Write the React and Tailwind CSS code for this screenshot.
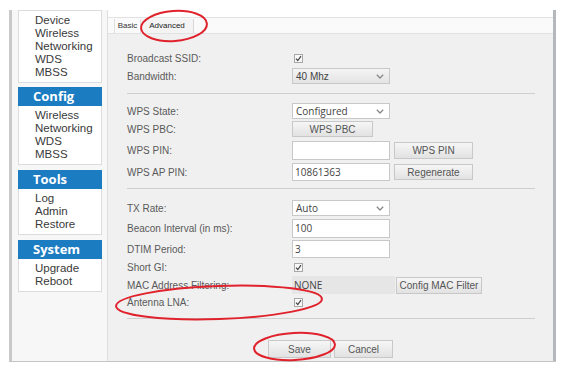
import React from "react";

const Check = () => (
  <span className="ml-[2px] inline-flex h-[9px] w-[9px] items-center justify-center border border-[#a8a8a8] bg-[#f8f8f8]">
    <svg width="7" height="7" viewBox="0 0 7 7">
      <path d="M1 3.6 L2.8 5.5 L6 1.2" fill="none" stroke="#444" strokeWidth="1.2" />
    </svg>
  </span>
);

const Chevron = () => (
  <svg width="8" height="5" viewBox="0 0 8 5" className="absolute right-[5px] top-[5px]">
    <path d="M0.8 0.8 L4 4 L7.2 0.8" fill="none" stroke="#888" strokeWidth="1.3" />
  </svg>
);

const Select = ({ children, grey }) => (
  <div
    className={
      "relative flex h-[16px] w-[98px] items-center border border-[#c8c8c8] pl-[3px] text-[10px] text-[#444] " +
      (grey ? "bg-gradient-to-b from-[#f4f4f4] to-[#e4e4e4] font-['Liberation_Sans',Arial,sans-serif]" : "bg-white font-['Open_Sans',sans-serif]")
    }
  >
    {children}
    <Chevron />
  </div>
);

const Input = ({ children, h = "h-[19px]" }) => (
  <div className={"flex w-[98px] items-center border border-[#c8c8c8] bg-white pl-[2px] font-['Open_Sans',sans-serif] text-[10px] text-[#444] " + h}>
    {children}
  </div>
);

const Btn = ({ children, w, h = "h-[17px]", cls = "" }) => (
  <div
    className={
      "flex items-center justify-center border border-[#c8c8c8] bg-gradient-to-b from-[#f6f6f6] to-[#e2e2e2] text-[10px] text-[#555] " +
      w + " " + h + " " + cls
    }
  >
    {children}
  </div>
);

const Row = ({ label, h, cls = "", children }) => (
  <div className={"flex items-center " + h + " " + cls}>
    <div className="w-[165px] text-[10px] text-[#5a5a5a]">{label}</div>
    {children}
  </div>
);

const Hr = ({ cls }) => <div className={"mr-[18px] h-px bg-[#cfcfcf] " + cls} />;

const SideBox = ({ items }) => (
  <div className="flex flex-col border-x border-b border-[#dcdcdc] bg-white pb-[3px] pl-[16px] pt-[3px] text-[11.5px] leading-[13px] text-[#3a3a3a]">
    {items.map((t) => (
      <div key={t}>{t}</div>
    ))}
  </div>
);

const Head = ({ children }) => (
  <div className="flex h-[19px] items-center bg-[#1c7cc2] pl-[15px] font-['Open_Sans',sans-serif] text-[13px] font-bold text-white">
    {children}
  </div>
);

export default function App() {
  return (
    <div className="relative h-[381px] w-[575px] overflow-hidden bg-white font-['Liberation_Sans',Arial,sans-serif]">
      <div className="ml-[9px] mt-[10px] flex h-[352px] w-[547px] border-b border-[#c4c4c4]">
        <div className="w-[3px] bg-[#c9c9c9]" />
        {/* sidebar */}
        <div className="flex w-[96px] flex-col border-r border-[#dedede] bg-[#f7f7f7] pl-[6px]">
          <div className="w-[84px]">
            <div className="border-t border-[#dcdcdc]">
              <SideBox items={["Device", "Wireless", "Networking", "WDS", "MBSS"]} />
            </div>
            <div className="mt-[4px]">
              <Head>Config</Head>
              <SideBox items={["Wireless", "Networking", "WDS", "MBSS"]} />
            </div>
            <div className="mt-[5px]">
              <Head>Tools</Head>
              <SideBox items={["Log", "Admin", "Restore"]} />
            </div>
            <div className="mt-[5px]">
              <Head>System</Head>
              <SideBox items={["Upgrade", "Reboot"]} />
            </div>
          </div>
        </div>
        {/* main */}
        <div className="flex flex-1 flex-col bg-[#f0f0f0]">
          <div className="h-[7px] bg-white" />
          <div className="flex h-[17px] border-y border-[#e2e2e2] bg-[#fafafa] pl-[6px]">
            <div className="mt-[1px] flex w-[27px] items-center justify-center border-x border-[#e0e0e0] text-[8px] text-[#333]">Basic</div>
            <div className="mt-[1px] flex w-[53px] items-center justify-center border-r border-[#d8d8d8] bg-[#f4f4f4] text-[8px] text-[#222]">Advanced</div>
          </div>
          <div className="flex flex-col pl-[19px] pt-[16px]">
            <Row label="Broadcast SSID:" h="h-[17px]">
              <Check />
            </Row>
            <Row label="Bandwidth:" h="h-[18px]">
              <Select grey>40 Mhz</Select>
            </Row>
            <Hr cls="mt-[8px]" />
            <Row label="WPS State:" h="h-[18px]" cls="mt-[8px]">
              <Select>Configured</Select>
            </Row>
            <Row label="WPS PBC:" h="h-[18px]">
              <Btn w="w-[81px]" h="h-[16px]">WPS PBC</Btn>
            </Row>
            <Row label="WPS PIN:" h="h-[22px]" cls="mt-[1px]">
              <Input />
              <Btn w="w-[79px]" cls="ml-[4px]">WPS PIN</Btn>
            </Row>
            <Row label="WPS AP PIN:" h="h-[22px]">
              <Input h="h-[18px]">10861363</Input>
              <Btn w="w-[79px]" h="h-[16px]" cls="ml-[4px]">Regenerate</Btn>
            </Row>
            <Hr cls="mt-[5px]" />
            <Row label="TX Rate:" h="h-[18px]" cls="mt-[10px]">
              <Select>Auto</Select>
            </Row>
            <Row label="Beacon Interval (in ms):" h="h-[22px]">
              <Input>100</Input>
            </Row>
            <Row label="DTIM Period:" h="h-[20px]">
              <Input h="h-[18px]">3</Input>
            </Row>
            <Row label="Short GI:" h="h-[16px]">
              <Check />
            </Row>
            <Row label="MAC Address Filtering:" h="h-[20px]">
              <div className="flex h-[18px] w-[103px] items-center bg-[#e6e6e6] pl-[2px] font-['Open_Sans',sans-serif] text-[10px] text-[#444]">NONE</div>
              <Btn w="w-[86px]" cls="ml-px">Config MAC Filter</Btn>
            </Row>
            <Row label="Antenna LNA:" h="h-[15px]">
              <Check />
            </Row>
            <Hr cls="mt-[8px]" />
          </div>
          <div className="mt-[21px] flex justify-center gap-[3px]">
            <Btn w="w-[63px]" h="h-[18px]">Save</Btn>
            <Btn w="w-[59px]" h="h-[18px]">Cancel</Btn>
          </div>
        </div>
        <div className="w-[3px] bg-[#b4b8bc]" />
      </div>
      <svg className="pointer-events-none absolute inset-0" width="575" height="381" viewBox="0 0 575 381">
        <g fill="none" stroke="#e0222c" strokeWidth="2">
          <ellipse cx="174" cy="26" rx="33" ry="15" transform="rotate(-4 174 26)" />
          <ellipse cx="219" cy="302.5" rx="103" ry="16.5" transform="rotate(-2 219 302.5)" />
          <ellipse cx="294.5" cy="346.5" rx="40.5" ry="13.5" transform="rotate(-3 294.5 346.5)" />
        </g>
      </svg>
    </div>
  );
}
